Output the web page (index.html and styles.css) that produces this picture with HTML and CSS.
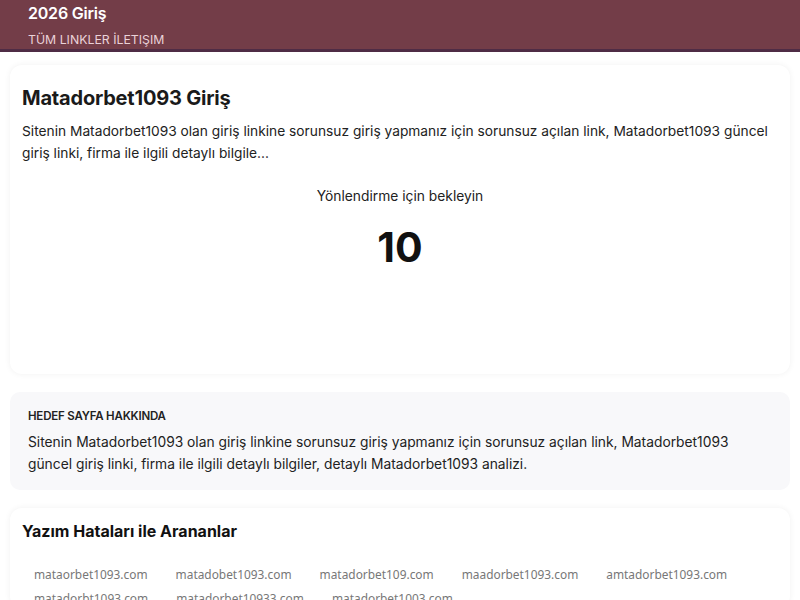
FILE: index.html
```html
<!DOCTYPE html>
<html lang="tr">
<head>
<meta charset="utf-8">
<title>Matadorbet1093 Giriş</title>
<link rel="stylesheet" href="styles.css">
</head>
<body>
<header class="topbar">
  <div class="brand">2026 Giriş</div>
  <nav class="nav"><a href="#">TÜM LINKLER</a> <a href="#">İLETIŞIM</a></nav>
</header>
<main class="page">
  <section class="card main-card">
    <h1 class="title">Matadorbet1093 Giriş</h1>
    <p class="lead">Sitenin Matadorbet1093 olan giriş linkine sorunsuz giriş yapmanız için sorunsuz açılan link, Matadorbet1093 güncel giriş linki, firma ile ilgili detaylı bilgile...</p>
    <p class="wait">Yönlendirme için bekleyin</p>
    <div class="count">10</div>
  </section>
  <section class="about">
    <h2 class="about-title">HEDEF SAYFA HAKKINDA</h2>
    <p class="about-text">Sitenin Matadorbet1093 olan giriş linkine sorunsuz giriş yapmanız için sorunsuz açılan link, Matadorbet1093 güncel giriş linki, firma ile ilgili detaylı bilgiler, detaylı Matadorbet1093 analizi.</p>
  </section>
  <section class="card typos">
    <h2 class="typos-title">Yazım Hataları ile Arananlar</h2>
    <ul class="typo-list">
      <li>mataorbet1093.com</li>
      <li>matadobet1093.com</li>
      <li>matadorbet109.com</li>
      <li>maadorbet1093.com</li>
      <li>amtadorbet1093.com</li>
      <li>matadorbt1093.com</li>
      <li>matadorbet10933.com</li>
      <li>matadorbet1003.com</li>
    </ul>
  </section>
</main>
</body>
</html>
```

FILE: styles.css
```css
* { box-sizing: border-box; }
html, body { margin: 0; padding: 0; background: #ffffff; }
body {
  font-family: Inter, "Noto Sans", sans-serif;
  color: #1a1a1a;
}
.topbar {
  background: #733d48;
  border-bottom: 3px solid #4f2c45;
  height: 52px;
  padding: 3px 28px 0;
}
.brand {
  color: #ffffff;
  font-weight: 600;
  font-size: 16px;
  line-height: 20px;
  letter-spacing: -0.2px;
}
.nav {
  margin-top: 9px;
  font-size: 12.3px;
  line-height: 16px;
  color: #ead2d8;
}
.nav a { color: #ead2d8; text-decoration: none; }
.page {
  padding: 13px 10px 0;
  display: flex;
  flex-direction: column;
  gap: 18px;
}
.card {
  background: #ffffff;
  border-radius: 12px;
  box-shadow: 0 0 6px rgba(0, 0, 0, 0.06);
  padding: 20px 12px;
}
.main-card { height: 309px; }
.title {
  margin: 0;
  font-size: 20px;
  line-height: 26px;
  font-weight: 700;
  letter-spacing: -0.2px;
}
.lead {
  margin: 9px 0 0;
  font-size: 13.75px;
  line-height: 22px;
  color: #222;
}
.wait {
  margin: 22px 0 0;
  text-align: center;
  font-size: 13.8px;
  line-height: 20px;
  color: #222;
}
.count {
  margin-top: 16px;
  text-align: center;
  font-size: 41px;
  line-height: 50px;
  font-weight: 700;
  color: #111;
}
.about {
  background: #f8f8fa;
  border-radius: 10px;
  padding: 16px 18px 15px;
}
.about-title {
  margin: 0;
  font-size: 11.5px;
  line-height: 16px;
  font-weight: 600;
  color: #222;
  letter-spacing: -0.2px;
}
.about-text {
  margin: 7px 0 0;
  font-size: 13.8px;
  line-height: 22px;
  color: #222;
}
.typos { padding: 12px 12px 0; }
.typos-title {
  margin: 0;
  font-size: 16px;
  line-height: 22px;
  font-weight: 700;
  color: #111;
}
.typo-list {
  list-style: none;
  margin: 22px 0 0;
  padding: 0;
  display: flex;
  flex-wrap: wrap;
  column-gap: 4px;
  row-gap: 4px;
}
.typo-list li {
  font-family: "Noto Sans", sans-serif;
  font-size: 11.9px;
  line-height: 20px;
  color: #777;
  padding: 0 12px;
}
```
